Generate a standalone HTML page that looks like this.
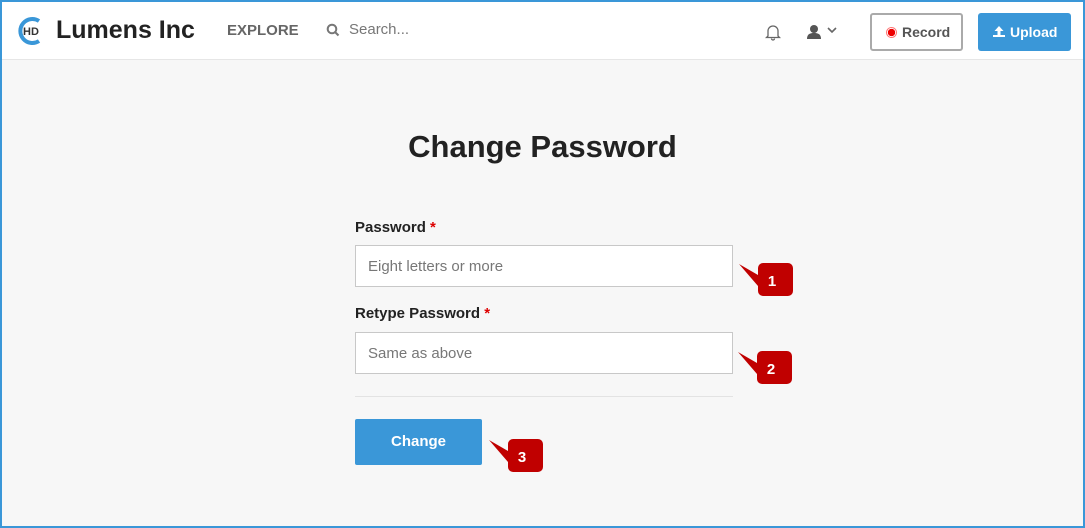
<!DOCTYPE html>
<html><head><style>
*{box-sizing:border-box;margin:0;padding:0}
body{width:1085px;height:528px;overflow:hidden;font-family:"Liberation Sans",sans-serif;background:#f7f7f7;position:relative}
.frame{position:absolute;inset:0;border:2px solid #3a97d8;pointer-events:none;z-index:9}
.hdr{position:absolute;left:0;top:0;width:1085px;height:60px;background:#fff;border-bottom:1px solid #e6e6e6}
.abs{position:absolute}
.lbl{font-weight:bold;font-size:15px;color:#222}
.inp{position:absolute;left:355px;width:378px;height:42px;border:1px solid #c8c8c8;background:#fff;font-size:15px;color:#777;padding:12px 12px}
.badge{position:absolute}
</style></head><body>
<div class="hdr">
<svg class="abs" style="left:15px;top:15px" width="32" height="32" viewBox="0 0 32 32"><path d="M24 6 A12 12 0 1 0 24 26" fill="none" stroke="#3a97d8" stroke-width="4"/><text x="8" y="20" font-family="Liberation Sans" font-weight="bold" font-size="11" fill="#333">HD</text></svg>
<div class="abs" style="left:56px;top:16px;font-size:25px;font-weight:bold;color:#222">Lumens Inc</div>
<div class="abs" style="left:227px;top:22px;font-size:15px;font-weight:bold;color:#666">EXPLORE</div>
<svg class="abs" style="left:326px;top:23px" width="14" height="14" viewBox="0 0 14 14"><circle cx="6" cy="6" r="4.3" fill="none" stroke="#777" stroke-width="2"/><path d="M9 9l3.5 3.5" stroke="#777" stroke-width="2"/></svg>
<div class="abs" style="left:349px;top:21px;font-size:15px;color:#777">Search...</div>
<svg class="abs" style="left:765px;top:23px" width="16" height="18" viewBox="0 0 16 18"><path d="M3 13V8a5 5 0 0 1 10 0v5l1.5 1.5h-13z M6.5 15.5a1.5 1.5 0 0 0 3 0" fill="none" stroke="#666" stroke-width="1.3"/></svg>
<svg class="abs" style="left:807px;top:24px" width="34" height="16" viewBox="0 0 34 16"><circle cx="7" cy="5" r="4" fill="#555"/><path d="M0 15c0-5 3-6 7-6s7 1 7 6z" fill="#555"/><path d="M21 4l4 4 4-4" fill="none" stroke="#666" stroke-width="1.6"/></svg>
<div class="abs" style="left:870px;top:13px;width:93px;height:38px;border:2px solid #aaa;border-radius:3px;background:#fff"></div>
<div class="abs" style="left:886px;top:27px;width:11px;height:11px;border-radius:50%;border:1.5px solid #f77;background:radial-gradient(#e00 55%,#fff 60%)"></div>
<div class="abs" style="left:902px;top:24px;font-size:14px;font-weight:bold;color:#555">Record</div>
<div class="abs" style="left:978px;top:13px;width:93px;height:38px;background:#3a97d8;border-radius:3px"></div>
<svg class="abs" style="left:992px;top:25px" width="14" height="13" viewBox="0 0 14 13"><path d="M7 1L2.5 6h3v4h3V6h3z M1 10v2h12v-2" fill="#fff"/></svg>
<div class="abs" style="left:1010px;top:24px;font-size:14px;font-weight:bold;color:#fff">Upload</div>
</div>
<div class="abs" style="left:0;width:1085px;top:129px;text-align:center;font-size:31px;font-weight:bold;color:#222">Change Password</div>
<div class="abs lbl" style="left:355px;top:219px">Password <span style="color:#d00">*</span></div>
<div class="inp" style="top:245px">Eight letters or more</div>
<div class="abs lbl" style="left:355px;top:305px">Retype Password <span style="color:#d00">*</span></div>
<div class="inp" style="top:332px">Same as above</div>
<div class="abs" style="left:355px;top:396px;width:378px;height:1px;background:#e3e3e3"></div>
<div class="abs" style="left:355px;top:419px;width:127px;height:46px;background:#3a97d8;border-radius:2px;color:#fff;font-weight:bold;font-size:15px;text-align:center;line-height:46px">Change</div>
<svg class="badge" style="left:738px;top:262px" width="56" height="36"><path d="M1 2L20 13V6a5 5 0 0 1 5-5h25a5 5 0 0 1 5 5v23a5 5 0 0 1-5 5H25a5 5 0 0 1-5-5v-5z" fill="#c00000"/><text x="34" y="24" text-anchor="middle" font-family="Liberation Sans" font-weight="bold" font-size="15" fill="#fff">1</text></svg>
<svg class="badge" style="left:737px;top:350px" width="56" height="36"><path d="M1 2L20 13V6a5 5 0 0 1 5-5h25a5 5 0 0 1 5 5v23a5 5 0 0 1-5 5H25a5 5 0 0 1-5-5v-5z" fill="#c00000"/><text x="34" y="24" text-anchor="middle" font-family="Liberation Sans" font-weight="bold" font-size="15" fill="#fff">2</text></svg>
<svg class="badge" style="left:488px;top:438px" width="56" height="36"><path d="M1 2L20 13V6a5 5 0 0 1 5-5h25a5 5 0 0 1 5 5v23a5 5 0 0 1-5 5H25a5 5 0 0 1-5-5v-5z" fill="#c00000"/><text x="34" y="24" text-anchor="middle" font-family="Liberation Sans" font-weight="bold" font-size="15" fill="#fff">3</text></svg>
<div class="frame"></div>
</body></html>
